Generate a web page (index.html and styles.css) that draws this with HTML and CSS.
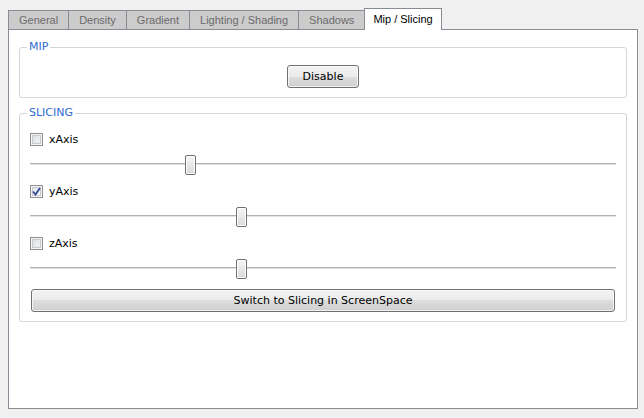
FILE: index.html
```html
<!DOCTYPE html>
<html>
<head>
    <title>Mip / Slicing</title>
    <link rel="stylesheet" href="styles.css">
</head>
<body>
    <div class="tabs">
        <div class="tab">General</div>
        <div class="tab">Density</div>
        <div class="tab">Gradient</div>
        <div class="tab">Lighting / Shading</div>
        <div class="tab">Shadows</div>
        <div class="tab active">Mip / Slicing</div>
    </div>
    <div class="pane">
        <fieldset class="group">
            <legend>MIP</legend>
            <div class="center">
                <button class="btn btn-small">Disable</button>
            </div>
        </fieldset>

        <fieldset class="group group-slicing">
            <legend>SLICING</legend>

            <label class="check"><span class="box"></span>xAxis</label>
            <div class="slider" style="--v: 0.27"><span class="handle"></span></div>

            <label class="check"><span class="box checked"><svg width="9" height="9" viewBox="0 0 9 9"><polyline points="1,4.5 3.5,7.5 8,1" fill="none" stroke="#34489a" stroke-width="1.8"/></svg></span>yAxis</label>
            <div class="slider" style="--v: 0.358"><span class="handle"></span></div>

            <label class="check"><span class="box"></span>zAxis</label>
            <div class="slider" style="--v: 0.358"><span class="handle"></span></div>

            <button class="btn btn-wide">Switch to Slicing in ScreenSpace</button>
        </fieldset>
    </div>
</body>
</html>
```

FILE: styles.css
```css
/* Transfer function panel, Mip / Slicing tab */
body {
    margin: 0;
    background-color: #f0f0f0;
    font-family: "DejaVu Sans", sans-serif;
    font-size: 11px;
    color: #000;
}
.tabs {
    display: flex;
    align-items: flex-end;
    padding: 8px 0 0 8px;
}
.tab {
    font-family: "Liberation Sans", Arial, sans-serif;
    height: 19px;
    line-height: 19px;
    padding: 0 10px;
    box-sizing: border-box;
    border: 1px solid #898c95;
    border-bottom: none;
    margin-left: -1px;
    background-color: #cccccc;
    color: #6b6b6b;
}
.tab:first-child {
    margin-left: 0;
}
.tab.active {
    position: relative;
    z-index: 1;
    height: 22px;
    line-height: 21px;
    padding: 0 8px;
    margin-bottom: -1px;
    background-color: #fff;
    color: #000;
}
.pane {
    margin: 0 6px 0 8px;
    height: 380px;
    box-sizing: border-box;
    border: 1px solid #898c95;
    background-color: #fff;
    padding: 10px 10px 0 10px;
}
.group {
    margin: 0;
    min-width: 0;
    border: 1px solid #d5d5d5;
    border-radius: 3px;
    padding: 11px 10px 9px 10px;
}
.group legend {
    margin-left: -3px;
    padding: 0 2px;
    line-height: 14px;
    color: #2f6bd0;
}
.group-slicing {
    margin-top: 8px;
    padding-top: 13px;
}
.center {
    display: flex;
    justify-content: center;
}
.btn {
    font-family: "DejaVu Sans", sans-serif;
    font-size: 11px;
    color: #000;
    height: 23px;
    padding: 0;
    border: 1px solid #707070;
    border-radius: 3px;
    background: linear-gradient(#f2f2f2 0%, #ebebeb 50%, #dddddd 50%, #cfcfcf 100%);
    box-shadow: inset 0 0 0 1px rgba(255, 255, 255, 0.7);
}
.btn-small {
    width: 72px;
}
.btn-wide {
    display: block;
    width: calc(100% - 2px);
    margin: 7px auto 0;
}
.check {
    display: flex;
    align-items: center;
    gap: 6px;
    height: 13px;
}
.box {
    width: 13px;
    height: 13px;
    box-sizing: border-box;
    border: 1px solid #8f8f8f;
    background: linear-gradient(135deg, #d9dbde, #f7f7f7);
    box-shadow: inset 0 0 0 1px #f4f4f4, inset 0 0 0 2px #c6cad0;
    display: flex;
    align-items: center;
    justify-content: center;
}
.box.checked {
    background: linear-gradient(135deg, #e4e6ea, #fbfbfb);
}
.slider {
    position: relative;
    height: 20px;
    margin: 9px 0 10px;
}
.slider::before {
    content: "";
    position: absolute;
    left: 0;
    right: 0;
    top: 8px;
    height: 1px;
    background-color: #b0b0b0;
    border-bottom: 1px solid #e4e4e4;
}
.handle {
    position: absolute;
    top: 0;
    left: calc((100% - 11px) * var(--v));
    width: 11px;
    height: 20px;
    box-sizing: border-box;
    border: 1px solid #707070;
    border-radius: 2px;
    background: linear-gradient(#f5f5f5, #dadada);
    box-shadow: inset 0 0 0 1px #fff;
}
```
